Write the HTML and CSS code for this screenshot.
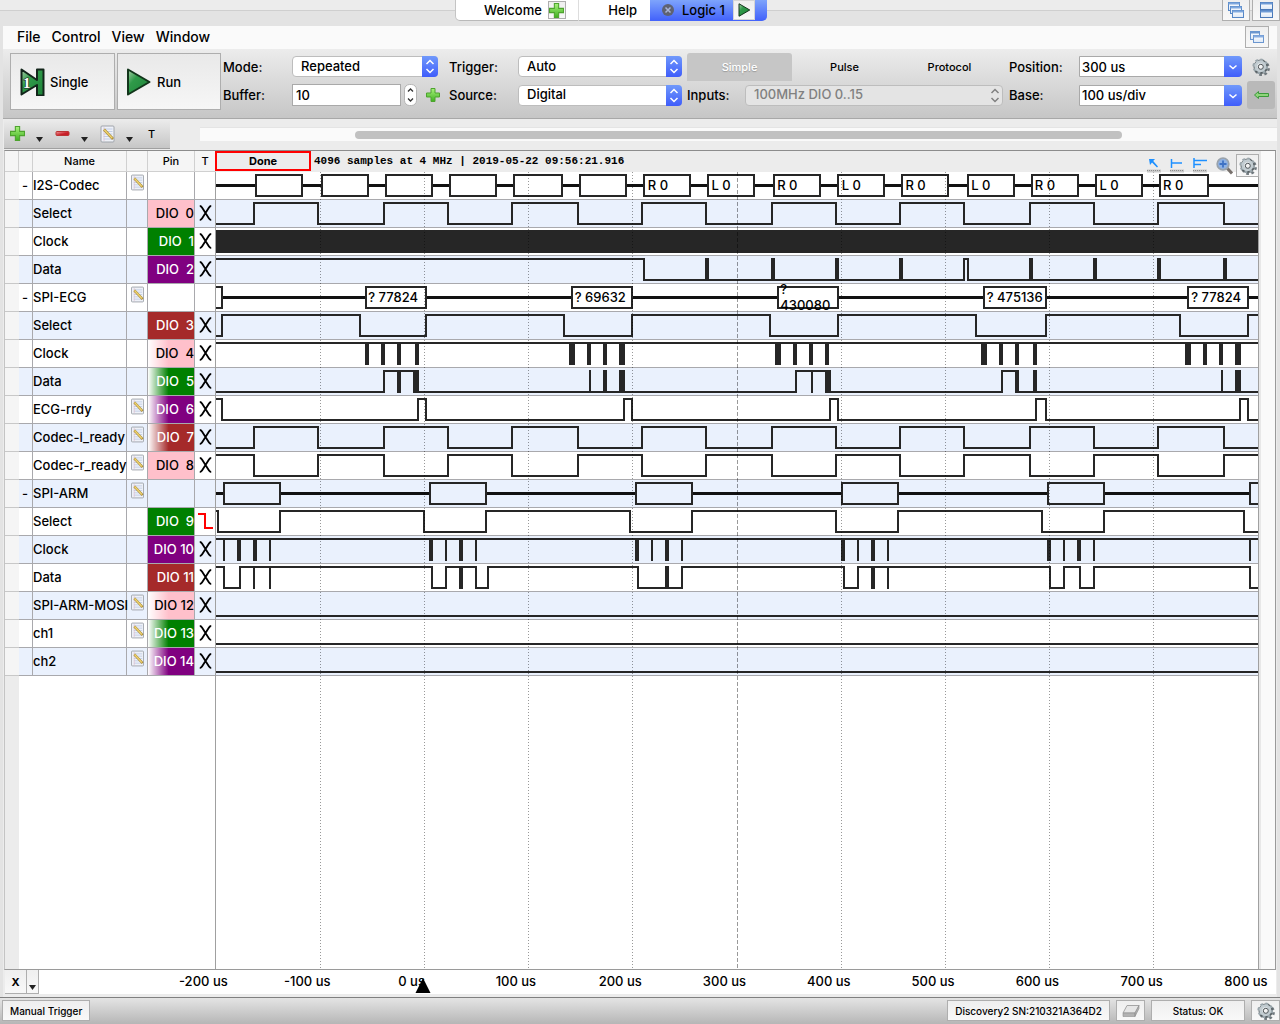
FILE: index.html
```html
<!DOCTYPE html>
<html lang="en">
<head>
<meta charset="utf-8">
<title>Logic 1</title>
<meta name="viewport" content="width=device-width, initial-scale=1">
<link rel="stylesheet" href="styles.css">
</head>
<body>
<svg class="defs" width="0" height="0" aria-hidden="true">
  <defs>
    <linearGradient id="g-green" x1="0" y1="0" x2="1" y2="1"><stop offset="0" stop-color="#a9cfa9"/><stop offset=".35" stop-color="#2f9a49"/><stop offset="1" stop-color="#1d8238"/></linearGradient>
    <linearGradient id="g-plus" x1="0" y1="0" x2="0" y2="1"><stop offset="0" stop-color="#a8f27c"/><stop offset="1" stop-color="#3fb021"/></linearGradient>
    <linearGradient id="g-minus" x1="0" y1="0" x2="1" y2="1"><stop offset="0" stop-color="#f0a0a0"/><stop offset=".6" stop-color="#c81e28"/></linearGradient>
    <linearGradient id="g-win" x1="0" y1="0" x2="0" y2="1"><stop offset="0" stop-color="#ffffff"/><stop offset="1" stop-color="#dde8f6"/></linearGradient>
    <symbol id="plus" viewBox="0 0 14 14"><path d="M5 .5h4V5h4.500v4H9v4.500H5V9H.5V5H5z" fill="url(#g-plus)" stroke="#4da32e"/></symbol>
    <symbol id="minus" viewBox="0 0 14 6"><rect x=".5" y=".5" width="13" height="4" rx="1" fill="url(#g-minus)" stroke="#b33"/></symbol>
    <symbol id="note" viewBox="0 0 14 18"><rect x=".5" y="1" width="13" height="16" rx="1" fill="#eef1f8" stroke="#a0a4ab"/><path d="M3 4h9M3 6.500h9M3 9h9M3 11.500h9M3 14h9" stroke="#c3cee6"/><path d="M3.500 2v14" stroke="#e3b9c6" stroke-width=".6"/><path d="M3.500 4.500l9 9.500" stroke="#a98a35" stroke-width="2.600"/><path d="M3.800 4.800l8 8.500" stroke="#eed26e" stroke-width="1.500"/></symbol>
    <symbol id="play" viewBox="0 0 24 28"><path d="M1 1.500L22.500 14 1 26.500z" fill="url(#g-green)" stroke="#12351b" stroke-width="2" stroke-linejoin="round"/></symbol>
    <symbol id="gear" viewBox="0 0 18 18"><circle cx="10" cy="10.200" r="6.600" fill="none" stroke="#6f787d" stroke-width="2.600" stroke-dasharray="2.700 2.480"/><circle cx="8.700" cy="8.800" r="5" fill="none" stroke="#596165" stroke-width="4.400"/><circle cx="8.300" cy="8.300" r="6.600" fill="none" stroke="#9aa6ac" stroke-width="2.600" stroke-dasharray="2.700 2.480"/><circle cx="8.300" cy="8.300" r="4.500" fill="#eef0f1" stroke="#c2ccd1" stroke-width="3"/><circle cx="8.800" cy="8.800" r="2.500" fill="#f3f3f3" stroke="#4d5458"/></symbol>
    <symbol id="updown" viewBox="0 0 16 21"><path d="M4.500 8L8 4.500 11.500 8M4.500 13L8 16.500 11.500 13" fill="none" stroke="currentColor" stroke-width="1.500"/></symbol>
    <symbol id="down" viewBox="0 0 16 21"><path d="M4.500 9.500L8 12.500l3.500-3" fill="none" stroke="currentColor" stroke-width="1.500"/></symbol>
    <symbol id="tri" viewBox="0 0 7 5"><path d="M0 0h7L3.500 5z" fill="#222"/></symbol>
    <symbol id="x" viewBox="0 0 13 16"><path d="M.8 1c1.200 0 1.700.6 2.200 1.400l7 11.200c.5.800 1 1.400 2.200 1.400M12.200 1c-1.200 0-1.700.6-2.200 1.400L3 13.600C2.500 14.400 2 15 .8 15" fill="none" stroke="#000" stroke-width="1.800"/></symbol>
    <symbol id="fall" viewBox="0 0 15 17"><path d="M0 2h7v14h8" fill="none" stroke="#f00" stroke-width="2"/></symbol>
    <symbol id="win1" viewBox="0 0 14 12"><rect x=".5" y=".5" width="9" height="8" fill="url(#g-win)" stroke="#6b96cf"/><path d="M.5 1.500h9" stroke="#6b96cf" stroke-width="2"/><rect x="3.500" y="4.500" width="10" height="7" fill="url(#g-win)" stroke="#6b96cf"/><path d="M3.500 5.500h10" stroke="#86ace0" stroke-width="2"/></symbol>
    <symbol id="win3" viewBox="0 0 16 16"><g fill="url(#g-win)" stroke="#5586c6"><rect x=".5" y=".5" width="11" height="8"/><rect x="2.500" y="4.500" width="11" height="7"/><rect x="4.500" y="8.500" width="11" height="7"/></g><path d="M.5 1.500h11M2.500 5.500h11M4.500 9.500h11" stroke="#7fa8de" stroke-width="2"/></symbol>
    <symbol id="win2" viewBox="0 0 13 16"><g fill="url(#g-win)" stroke="#4a79b8"><rect x=".5" y=".5" width="12" height="7"/><rect x=".5" y="8.500" width="12" height="7"/></g><path d="M.5 1.500h12M.5 9.500h12" stroke="#6e9bd6" stroke-width="2"/></symbol>
    <symbol id="ruler" viewBox="0 0 14 4"><rect width="14" height="3" y=".5" fill="#c9c9c9"/><path d="M0 1.500h14" stroke="#8e8e8e" stroke-dasharray="1 1"/></symbol>
  </defs>
</svg>

<header class="tabbar">
  <nav class="tabs" aria-label="Instruments">
    <div class="tab tab-welcome"><button class="plain">Welcome</button><button class="mini" aria-label="New instrument"><svg width="15" height="15"><use href="#plus"/></svg></button></div>
    <button class="tab tab-help">Help</button>
    <div class="tab tab-logic">
      <button class="plain" aria-label="Close"><svg width="12" height="12" viewBox="0 0 12 12"><circle cx="6" cy="6" r="6" fill="#5e6272"/><path d="M3.500 3.500l5 5m0-5l-5 5" stroke="#a9b4d8" stroke-width="1.500"/></svg></button>
      <button class="plain">Logic 1</button>
      <button class="mini run" aria-label="Run Logic 1"><svg width="13" height="14"><use href="#play"/></svg></button>
    </div>
  </nav>
  <div class="winbtns">
    <button class="mini" aria-label="Cascade"><svg width="16" height="16"><use href="#win3"/></svg></button>
    <button class="mini" aria-label="Tile"><svg width="13" height="16"><use href="#win2"/></svg></button>
  </div>
</header>

<main class="window">
  <nav class="menu" aria-label="Menu">
    <button class="plain">File</button><button class="plain">Control</button><button class="plain">View</button><button class="plain">Window</button>
    <button class="mini undock" aria-label="Undock"><svg width="14" height="12"><use href="#win1"/></svg></button>
  </nav>

  <section class="toolbar" aria-label="Acquisition">
    <button class="big"><svg width="26" height="28" viewBox="0 0 26 28"><path d="M1.500 1.500L17 12V1.500h6.500v26H17V17L1.500 26.500z" fill="url(#g-green)" stroke="#12251a" stroke-width="2" stroke-linejoin="round"/><text x="3" y="20" class="one">1</text></svg>Single</button>
    <button class="big"><svg width="24" height="28"><use href="#play"/></svg>Run</button>
    <div class="settings">
      <label for="mode">Mode:</label>
      <span class="pick mode"><select id="mode"><option>Repeated</option></select><svg class="cap"><use href="#updown"/></svg></span>
      <label for="trigger">Trigger:</label>
      <span class="pick wide"><select id="trigger"><option>Auto</option></select><svg class="cap"><use href="#updown"/></svg></span>
      <div class="kinds"><button class="on">Simple</button><button>Pulse</button><button>Protocol</button></div>
      <label for="position">Position:</label>
      <span class="pick combo"><select id="position"><option>300 us</option></select><svg class="cap"><use href="#down"/></svg></span>
      <button class="plain end" aria-label="Options"><svg width="18" height="18"><use href="#gear"/></svg></button>

      <label for="buffer">Buffer:</label>
      <span class="buffer"><input id="buffer" type="text" value="10"><svg class="spin" viewBox="0 0 13 22"><rect x=".5" y=".5" width="12" height="21" rx="5" fill="#fff" stroke="#b5b5b5"/><path d="M4 7.500L6.500 5 9 7.500M4 14.500L6.500 17 9 14.500" fill="none" stroke="#333" stroke-width="1.300"/></svg><button class="plain" aria-label="Add buffer"><svg width="14" height="14"><use href="#plus"/></svg></button></span>
      <label for="source">Source:</label>
      <span class="pick wide"><select id="source"><option>Digital</option></select><svg class="cap"><use href="#updown"/></svg></span>
      <div class="inputs"><label for="inputs">Inputs:</label><span class="pick off"><select id="inputs" disabled><option>100MHz DIO 0..15</option></select><svg class="cap"><use href="#updown"/></svg></span></div>
      <label for="base">Base:</label>
      <span class="pick combo"><select id="base"><option>100 us/div</option></select><svg class="cap"><use href="#down"/></svg></span>
      <button class="plain back" aria-label="Collapse"><svg width="15" height="8" viewBox="0 0 15 8"><path d="M.5 4L4.500.5v2h10v3h-10v2z" fill="#8fd47c" stroke="#3b9a3b"/></svg></button>
    </div>
  </section>

  <div class="strip">
    <div class="edit">
      <button class="plain" aria-label="Add"><svg width="15" height="15"><use href="#plus"/></svg><svg class="tri"><use href="#tri"/></svg></button>
      <button class="plain" aria-label="Remove"><svg width="15" height="6"><use href="#minus"/></svg><svg class="tri"><use href="#tri"/></svg></button>
      <button class="plain" aria-label="Edit"><svg width="15" height="18"><use href="#note"/></svg><svg class="tri"><use href="#tri"/></svg></button>
      <button class="plain letter">T</button>
    </div>
    <div class="scroll"><div class="thumb"></div></div>
  </div>

  <section class="scope" aria-label="Signals">
    <div class="view">
      <table>
        <colgroup><col class="c-gut"><col class="c-exp"><col class="c-name"><col class="c-note"><col class="c-pin"><col class="c-trig"><col></colgroup>
        <thead><tr><th></th><th></th><th>Name</th><th></th><th>Pin</th><th>T</th><th class="plot"><div class="state"><span class="done">Done</span><span class="info">4096 samples at 4 MHz | 2019-05-22 09:56:21.916</span></div></th></tr></thead>
        <tbody>
          <tr><td></td><td>-</td><td>I2S-Codec</td><td><svg class="nt"><use href="#note"/></svg></td><td></td><td></td>
            <td class="plot"><svg><svg viewBox="216 0 1043 27" preserveAspectRatio="none"><path class="bus" d="M216 13.500h40M302 13.500h20M368 13.500h18M432 13.500h18M496 13.500h18M562 13.500h18M626 13.500h18M690 13.500h18M754 13.500h20M820 13.500h18M884 13.500h18M948 13.500h20M1014 13.500h18M1078 13.500h18M1142 13.500h18M1208 13.500h51"/><path class="w" d="M256 3h46v21h-46zM322 3h46v21h-46zM386 3h46v21h-46zM450 3h46v21h-46zM514 3h48v21h-48zM580 3h46v21h-46zM644 3h46v21h-46zM708 3h46v21h-46zM774 3h46v21h-46zM838 3h46v21h-46zM902 3h46v21h-46zM968 3h46v21h-46zM1032 3h46v21h-46zM1096 3h46v21h-46zM1160 3h48v21h-48z"/></svg>
            <text x="41.400%" y="18">R 0</text><text x="47.500%" y="18">L 0</text><text x="53.800%" y="18">R 0</text><text x="60%" y="18">L 0</text><text x="66.100%" y="18">R 0</text><text x="72.400%" y="18">L 0</text><text x="78.500%" y="18">R 0</text><text x="84.700%" y="18">L 0</text><text x="90.800%" y="18">R 0</text></svg></td></tr>
          <tr><td></td><td></td><td>Select</td><td></td><td class="pink">DIO  0</td><td><svg class="x"><use href="#x"/></svg></td>
            <td class="plot"><svg viewBox="216 0 1043 27" preserveAspectRatio="none"><path class="w" d="M216 24H254V3H318V24H384V3H448V24H512V3H578V24H642V3H706V24H772V3H836V24H900V3H964V24H1030V3H1094V24H1158V3H1224V24H1259"/></svg></td></tr>
          <tr><td></td><td></td><td>Clock</td><td></td><td class="green">DIO  1</td><td><svg class="x"><use href="#x"/></svg></td>
            <td class="plot"><svg viewBox="216 0 1043 27" preserveAspectRatio="none"><path class="b" d="M216 2h1043v23H216z"/></svg></td></tr>
          <tr><td></td><td></td><td>Data</td><td></td><td class="purple">DIO  2</td><td><svg class="x"><use href="#x"/></svg></td>
            <td class="plot"><svg viewBox="216 0 1043 27" preserveAspectRatio="none"><path class="w" d="M216 3H644V24H964V3H968V24H1259"/><path class="b" d="M705 2h4v23h-4zM771 2h4v23h-4zM835 2h4v23h-4zM899 2h4v23h-4zM1029 2h4v23h-4zM1093 2h4v23h-4zM1157 2h4v23h-4zM1223 2h4v23h-4z"/></svg></td></tr>
          <tr><td></td><td>-</td><td>SPI-ECG</td><td><svg class="nt"><use href="#note"/></svg></td><td></td><td></td>
            <td class="plot"><svg><svg viewBox="216 0 1043 27" preserveAspectRatio="none"><path class="bus" d="M222 13.500H366M426 13.500H572M632 13.500H778M838 13.500H984M1046 13.500H1188M1248 13.500H1259"/><path class="w" d="M216 3h6v21h-6M366 3h60v21h-60zM572 3h60v21h-60zM778 3h60v21h-60zM984 3h62v21h-62zM1188 3h60v21h-60z"/></svg>
            <text x="14.600%" y="18">? 77824</text><text x="34.400%" y="18">? 69632</text><text x="54.100%" y="10">?</text><text x="54.100%" y="26">430080</text><text x="73.900%" y="18">? 475136</text><text x="93.500%" y="18">? 77824</text></svg></td></tr>
          <tr><td></td><td></td><td>Select</td><td></td><td class="brown">DIO  3</td><td><svg class="x"><use href="#x"/></svg></td>
            <td class="plot"><svg viewBox="216 0 1043 27" preserveAspectRatio="none"><path class="w" d="M216 24H222V3H360V24H426V3H564V24H632V3H770V24H838V3H976V24H1046V3H1180V24H1248V3H1259"/></svg></td></tr>
          <tr><td></td><td></td><td>Clock</td><td></td><td class="pink fade">DIO  4</td><td><svg class="x"><use href="#x"/></svg></td>
            <td class="plot"><svg viewBox="216 0 1043 27" preserveAspectRatio="none"><path class="w" d="M216 3H1259"/><path class="b" d="M365 3h4v22h-4zM381 3h4v22h-4zM397 3h4v22h-4zM415 3h4v22h-4zM569 3h6v22h-6zM587 3h4v22h-4zM603 3h4v22h-4zM619 3h6v22h-6zM775 3h6v22h-6zM793 3h4v22h-4zM809 3h4v22h-4zM825 3h4v22h-4zM981 3h6v22h-6zM999 3h4v22h-4zM1015 3h4v22h-4zM1033 3h4v22h-4zM1185 3h6v22h-6zM1203 3h4v22h-4zM1219 3h4v22h-4zM1235 3h6v22h-6z"/></svg></td></tr>
          <tr><td></td><td></td><td>Data</td><td></td><td class="green fade">DIO  5</td><td><svg class="x"><use href="#x"/></svg></td>
            <td class="plot"><svg viewBox="216 0 1043 27" preserveAspectRatio="none"><path class="w" d="M216 24H384V3H416V24H796V3H828V24H1002V3H1017V24H1259"/><path class="b" d="M397 3h4v22h-4zM413 2h6v23h-6zM589 2h2v23h-2zM603 2h4v23h-4zM619 2h6v23h-6zM811 3h2v22h-2zM825 2h6v23h-6zM1015 2h4v23h-4zM1033 2h4v23h-4zM1221 2h2v23h-2zM1235 2h6v23h-6z"/></svg></td></tr>
          <tr><td></td><td></td><td>ECG-rrdy</td><td><svg class="nt"><use href="#note"/></svg></td><td class="purple fade">DIO  6</td><td><svg class="x"><use href="#x"/></svg></td>
            <td class="plot"><svg viewBox="216 0 1043 27" preserveAspectRatio="none"><path class="w" d="M216 3H222V24H418V3H426V24H624V3H632V24H830V3H838V24H1036V3H1046V24H1240V3H1248V24H1259"/></svg></td></tr>
          <tr><td></td><td></td><td>Codec-l_ready</td><td><svg class="nt"><use href="#note"/></svg></td><td class="brown fade">DIO  7</td><td><svg class="x"><use href="#x"/></svg></td>
            <td class="plot"><svg viewBox="216 0 1043 27" preserveAspectRatio="none"><path class="w" d="M216 24H254V3H318V24H384V3H448V24H512V3H578V24H642V3H706V24H772V3H836V24H900V3H964V24H1030V3H1094V24H1158V3H1224V24H1259"/></svg></td></tr>
          <tr><td></td><td></td><td>Codec-r_ready</td><td><svg class="nt"><use href="#note"/></svg></td><td class="pink">DIO  8</td><td><svg class="x"><use href="#x"/></svg></td>
            <td class="plot"><svg viewBox="216 0 1043 27" preserveAspectRatio="none"><path class="w" d="M216 3H254V24H318V3H384V24H448V3H512V24H578V3H642V24H706V3H772V24H836V3H900V24H964V3H1030V24H1094V3H1158V24H1224V3H1259"/></svg></td></tr>
          <tr><td></td><td>-</td><td>SPI-ARM</td><td><svg class="nt"><use href="#note"/></svg></td><td></td><td></td>
            <td class="plot"><svg viewBox="216 0 1043 27" preserveAspectRatio="none"><path class="bus" d="M216 13.500h8M280 13.500H430M486 13.500H636M692 13.500H842M898 13.500H1048M1104 13.500H1250"/><path class="w" d="M224 3h56v21h-56zM430 3h56v21h-56zM636 3h56v21h-56zM842 3h56v21h-56zM1048 3h56v21h-56zM1259 3h-9v21h9"/></svg></td></tr>
          <tr><td></td><td></td><td>Select</td><td></td><td class="green">DIO  9</td><td><svg class="fall"><use href="#fall"/></svg></td>
            <td class="plot"><svg viewBox="216 0 1043 27" preserveAspectRatio="none"><path class="w" d="M216 3H218V24H280V3H424V24H486V3H630V24H692V3H836V24H898V3H1042V24H1104V3H1244V24H1259"/></svg></td></tr>
          <tr><td></td><td></td><td>Clock</td><td></td><td class="purple">DIO 10</td><td><svg class="x"><use href="#x"/></svg></td>
            <td class="plot"><svg viewBox="216 0 1043 27" preserveAspectRatio="none"><path class="w" d="M216 3H1259"/><path class="b" d="M223 3h2v22h-2zM237 3h4v22h-4zM253 3h4v22h-4zM269 3h2v22h-2zM429 3h4v22h-4zM445 3h2v22h-2zM459 3h4v22h-4zM475 3h2v22h-2zM635 3h4v22h-4zM651 3h2v22h-2zM665 3h4v22h-4zM681 3h2v22h-2zM841 3h4v22h-4zM857 3h2v22h-2zM871 3h4v22h-4zM887 3h2v22h-2zM1047 3h4v22h-4zM1063 3h2v22h-2zM1077 3h4v22h-4zM1093 3h2v22h-2zM1249 3h2v22h-2z"/></svg></td></tr>
          <tr><td></td><td></td><td>Data</td><td></td><td class="brown">DIO 11</td><td><svg class="x"><use href="#x"/></svg></td>
            <td class="plot"><svg viewBox="216 0 1043 27" preserveAspectRatio="none"><path class="w" d="M216 3H224V24H240V3H432V24H446V3H476V24H488V3H638V24H682V3H844V24H858V3H1050V24H1064V3H1080V24H1094V3H1250V24H1259"/><path class="b" d="M253 3h2v22h-2zM269 3h2v22h-2zM459 3h4v22h-4zM665 2h4v23h-4zM871 3h4v22h-4zM887 3h2v22h-2z"/></svg></td></tr>
          <tr><td></td><td></td><td>SPI-ARM-MOSI</td><td><svg class="nt"><use href="#note"/></svg></td><td class="pink fade">DIO 12</td><td><svg class="x"><use href="#x"/></svg></td>
            <td class="plot"><svg viewBox="216 0 1043 27" preserveAspectRatio="none"><path class="w" d="M216 24H1259"/></svg></td></tr>
          <tr><td></td><td></td><td>ch1</td><td><svg class="nt"><use href="#note"/></svg></td><td class="green fade">DIO 13</td><td><svg class="x"><use href="#x"/></svg></td>
            <td class="plot"><svg viewBox="216 0 1043 27" preserveAspectRatio="none"><path class="w" d="M216 24H1259"/></svg></td></tr>
          <tr><td></td><td></td><td>ch2</td><td><svg class="nt"><use href="#note"/></svg></td><td class="purple fade">DIO 14</td><td><svg class="x"><use href="#x"/></svg></td>
            <td class="plot"><svg viewBox="216 0 1043 27" preserveAspectRatio="none"><path class="w" d="M216 24H1259"/></svg></td></tr>
        </tbody>
      </table>
      <svg class="grid" aria-hidden="true"><line x1="10%" x2="10%" y2="100%"/><line x1="20%" x2="20%" y2="100%"/><line x1="30%" x2="30%" y2="100%"/><line x1="40%" x2="40%" y2="100%"/><line class="mid" x1="50%" x2="50%" y2="100%"/><line x1="60%" x2="60%" y2="100%"/><line x1="70%" x2="70%" y2="100%"/><line x1="80%" x2="80%" y2="100%"/><line x1="90%" x2="90%" y2="100%"/></svg>
      <div class="tools">
        <button class="plain" aria-label="Cursor"><svg width="14" height="15" viewBox="0 0 14 15"><path d="M2 1h6L6.200 3 11 8.500 10 9.500 5 4.500 3 7z" fill="#1e90ff"/><use href="#ruler" y="11" width="14" height="4"/></svg></button>
        <button class="plain" aria-label="Cursor pair"><svg width="14" height="15" viewBox="0 0 14 15"><path d="M1.500 1v9M2 5h10" fill="none" stroke="#1e90ff" stroke-width="1.500"/><use href="#ruler" y="11" width="14" height="4"/></svg></button>
        <button class="plain" aria-label="Cursor list"><svg width="14" height="15" viewBox="0 0 14 15"><path d="M1 0v10M1 2.500h13M1 6.500h7" fill="none" stroke="#1e90ff" stroke-width="1.500"/><use href="#ruler" y="11" width="14" height="4"/></svg></button>
        <button class="plain" aria-label="Zoom"><svg width="17" height="18" viewBox="0 0 17 18"><path d="M11 11l5 5.500" stroke="#77706c" stroke-width="3"/><circle cx="7" cy="7" r="5.800" fill="#8fb2e4" stroke="#9aa3ac" stroke-width="1.800"/><path d="M7 3.500v7M3.500 7h7" stroke="#3f72c4" stroke-width="1.800"/></svg></button>
        <button class="mini" aria-label="Plot options"><svg width="18" height="18"><use href="#gear"/></svg></button>
      </div>
    </div>
    <div class="vscroll"></div>
  </section>

  <div class="axis">
    <div class="xsel"><button class="mini">X</button><button class="mini low" aria-label="Axis menu"><svg class="tri"><use href="#tri"/></svg></button></div>
    <div class="ticks"><span>-200 us</span><span>-100 us</span><span class="zero">0 us<svg class="marker" viewBox="0 0 16 16"><path d="M8 0l7.500 15H.5z"/></svg></span><span>100 us</span><span>200 us</span><span>300 us</span><span>400 us</span><span>500 us</span><span>600 us</span><span>700 us</span><span>800 us</span></div>
  </div>
</main>

<footer class="status">
  <button class="mini">Manual Trigger</button>
  <button class="mini device">Discovery2 SN:210321A364D2</button>
  <button class="mini sq" aria-label="Device"><svg width="18" height="12" viewBox="0 0 18 12"><path d="M5 .5h12L13 8H1z" fill="#e6e6e6" stroke="#a5a5a5"/><path d="M1 8h12v3.500H1zM13 8l4-7.500v3L13 11.500z" fill="#b2b2b2" stroke="#8e8e8e" stroke-width=".6"/></svg></button>
  <button class="mini ok">Status: OK</button>
  <button class="mini sq" aria-label="Settings"><svg width="18" height="18"><use href="#gear"/></svg></button>
</footer>
</body>
</html>
```
FILE: styles.css
```css
* { box-sizing: border-box; }
body {
  margin: 0;
  min-height: 100vh;
  display: flex;
  flex-direction: column;
  background: #e3e3e3;
  color: #000;
  font: 500 13px/16px Inter, "Liberation Sans", sans-serif;
}
.defs { position: absolute; }
svg { display: block; flex: none; }
button, select, input { font: inherit; color: inherit; margin: 0; }
button { padding: 0; white-space: nowrap; }
.plain { border: 0; background: none; }
.mini {
  display: flex;
  align-items: center;
  justify-content: center;
  border: 1px solid #aeaeae;
  background: linear-gradient(#efefef, #f8f8f8);
}

/* instrument tabs */
.tabbar {
  display: flex;
  height: 26px;
  align-items: flex-start;
  background: linear-gradient(#ececec 10px, #cfcfcf 10px, #cfcfcf 11px, #e3e3e3 11px);
}
.tabs { display: flex; margin: 0 auto; }
.tab {
  display: flex;
  align-items: center;
  height: 21px;
  border: 0;
  border-bottom: 1px solid #b9b9b9;
  background: #fff;
}
.tab-welcome { width: 124px; padding-left: 28px; gap: 6px; border-left: 1px solid #c4c4c4; border-right: 1px solid #ddd; border-radius: 0 0 0 5px; }
.tab-welcome .mini { width: 18px; height: 18px; }
.tab-help { width: 71px; justify-content: flex-end; padding-right: 13px; }
.tab-logic { width: 117px; padding-left: 12px; gap: 8px; background: linear-gradient(#7ea4fb, #4464fb); border-bottom-color: #4464fb; border-radius: 0 0 5px 0; }
.tab-logic .run { width: 22px; height: 20px; border-color: #d5d5d5; margin-left: auto; margin-right: 12px; }
.winbtns { display: flex; gap: 2px; }
.winbtns .mini { width: 28px; height: 21px; border-top: 0; }

/* window body */
.window { flex: 1; display: flex; flex-direction: column; margin: 0 3px; background: #ececec; }
.menu { display: flex; align-items: center; height: 23px; padding-left: 14px; padding-bottom: 1px; gap: 11px; background: #fafafa; font-size: 14px; }
.undock { width: 24px; height: 22px; margin-left: auto; margin-right: 8px; }

.toolbar {
  display: flex;
  gap: 2px;
  height: 70px;
  padding: 4px 2px 8px 7px;
  border-bottom: 1px solid #a8a8a8;
  background: linear-gradient(#ececec, #c6c6c6);
}
.big { display: flex; align-items: center; gap: 2px; width: 105px; padding-left: 9px; border: 1px solid #aeaeae; background: linear-gradient(#e9e9e9, #f6f6f6); }
.big svg { margin-right: 2px; }
.big + .big { width: 104px; gap: 4px; }
.one { fill: #fff; stroke: #222; stroke-width: 1px; paint-order: stroke; font: 700 15px "Liberation Serif", serif; }
.settings {
  flex: 1;
  display: grid;
  grid-template-columns: 69px 157px 69px 169px 1fr 70px 168px 28px;
  grid-template-rows: 27px 30px;
  align-items: center;
}
.pick { display: grid; height: 21px; margin-right: 5px; }
.pick select, .pick .cap { grid-area: 1 / 1; }
.pick select {
  appearance: none;
  width: 100%;
  height: 21px;
  padding: 0 18px 2px 8px;
  border: 1px solid #bdbdbd;
  border-radius: 4px;
  background: #fff;
}
.mode { margin-right: 11px; }
.cap { justify-self: end; width: 16px; height: 21px; border-radius: 0 4px 4px 0; color: #fff; background: linear-gradient(#7099fb, #3f5dfb); pointer-events: none; }
.combo .cap { width: 18px; }
.combo select { border-radius: 0 4px 4px 0; border-color: #a9a9a9; padding-left: 2px; padding-bottom: 0; }
.off { flex: 1; margin-right: 6px; }
.off select { background: #e4e4e4; color: #808080; opacity: 1; }
.off .cap { background: none; color: #808080; }
.kinds { display: flex; height: 28px; margin-right: 7px; }
.kinds button { flex: 1; border: 0; background: none; font-size: 11px; }
.kinds .on { background: #c6c6c6; color: #fff; border-radius: 3px 3px 0 0; text-shadow: 0 1px 1px #999; }
.inputs { display: flex; align-items: center; }
.inputs label { width: 58px; }
.buffer { display: flex; align-items: center; }
.buffer input { width: 109px; height: 22px; padding: 0 3px; border: 1px solid #a9a9a9; background: #fff; }
.spin { width: 13px; height: 22px; margin: 0 9px 0 3px; }
.end { justify-self: center; }
.back { display: flex; align-items: center; justify-content: center; height: 28px; border-radius: 3px; background: #b9b9b9; }

.strip { display: flex; align-items: center; height: 31px; padding: 0 0 1px 1px; }
.edit { display: flex; height: 30px; width: 166px; padding-left: 6px; background: linear-gradient(#ececec, #c6c6c6); border-bottom: 1px solid #a0a0a0; }
.edit button { display: flex; align-items: center; width: 45px; gap: 11px; }
.edit .letter { width: 24px; padding-left: 3px; font-size: 11px; }
.tri { width: 7px; height: 5px; }
.edit .tri { margin-top: 12px; }
.scroll { flex: 1; height: 14px; margin-left: 30px; padding: 3px 0; background: #fafafa; border-top: 1px solid #e4e4e4; }
.thumb { width: 71.200%; height: 8px; margin-left: 14.400%; border-radius: 4px; background: #c1c1c1; }

/* signal list and plot */
.scope { flex: 1; display: flex; margin: 0 1px; border: 1px solid #9a9a9a; border-top-color: #8c8c8c; border-left-color: #c4c4c4; }
.view { flex: 1; position: relative; background: linear-gradient(90deg, #ececec 14px, #fff 14px); }
.vscroll { width: 16px; border-left: 2px solid #e8e8e8; background: #fafafa; }
table { width: 100%; table-layout: fixed; border-collapse: separate; border-spacing: 0; }
.c-gut, .c-exp { width: 14px; }
.c-name { width: 94px; }
.c-note, .c-trig { width: 21px; }
.c-pin { width: 47px; }
th, td { padding: 0 0 2px; height: 28px; border: 0 solid #a9a9ad; border-width: 0 1px 1px 0; white-space: pre; }
th { padding: 0; height: 21px; font-size: 11px; font-weight: 500; line-height: 14px; background: #f5f5f5; border-color: #d0d0d0; }
tbody tr { background: #fff; }
tbody tr:nth-child(even) { background: #eaf1fd; }
td:first-child { background: #f5f5f5; border-right: 0; border-color: #c8c8c8; }
td:nth-child(2) { text-align: right; padding-right: 4px; }
td:nth-child(5) { text-align: right; }
td.plot, th.plot { padding: 0; border-right: 0; }
th.plot { border-bottom: 0; background: #ececec; }
td.plot > svg { width: 100%; height: 27px; overflow: visible; }
.pink { background: #ffc0cb; }
.green { background: #008000; color: #fff; }
.purple { background: #800080; color: #fff; }
.brown { background: #a52a2a; color: #fff; }
.fade { background: linear-gradient(90deg, #fff, transparent 45%), var(--pin); }
.pink.fade { --pin: #ffc0cb; }
.green.fade { --pin: #008000; }
.purple.fade { --pin: #800080; }
.brown.fade { --pin: #a52a2a; }
.nt { width: 13px; height: 17px; margin: 0 0 4px 4px; }
.x { width: 13px; height: 16px; margin: 0 auto; }
.fall { width: 15px; height: 17px; margin: 0 auto; }
.w { fill: none; stroke: #262626; stroke-width: 2px; }
.b { fill: #262626; }
.bus { fill: none; stroke: #111; stroke-width: 3px; }
.state { display: flex; height: 21px; align-items: flex-start; margin-left: -1px; }
.done { width: 96px; height: 20px; border: 2px solid #f00; font-weight: 700; line-height: 17px; text-align: center; }
.info { padding-left: 3px; font: 700 11px/20px "Liberation Mono", monospace; }
.grid { position: absolute; left: 210px; top: 21px; width: calc(100% - 210px); height: calc(100% - 21px); border: 1px solid #a0a0a0; border-width: 0 1px; shape-rendering: crispEdges; pointer-events: none; }
.grid line { stroke: #000; stroke-opacity: .4; stroke-dasharray: 1 2; }
.grid .mid { stroke-dasharray: 4 2; }
.tools { position: absolute; top: 3px; right: 0; display: flex; align-items: center; gap: 9px; height: 23px; }
.tools .mini { width: 23px; height: 23px; margin-left: -6px; }

.axis { display: flex; height: 24px; margin: 0 1px 3px 2px; background: #fff; }
.xsel { display: flex; width: 34px; }
.xsel .mini { width: 22px; font-size: 11px; font-weight: 700; border-top: 0; border-left: 0; }
.xsel .low { width: 12px; align-items: flex-end; padding-bottom: 3px; }
.ticks { flex: 1; display: flex; justify-content: space-between; margin: 3px 6px 0 140px; }
.ticks span { width: 48px; text-align: center; white-space: nowrap; }
.zero { position: relative; }
.marker { position: absolute; left: 27px; top: 5px; width: 16px; height: 16px; }

.status { display: flex; gap: 6px; height: 27px; padding: 2px 0 3px 2px; border-top: 1px solid #808080; background: linear-gradient(#e4e4e4, #b6b6b6); font-size: 10px; }
.status .mini { padding: 0 7px; }
.status .device { margin-left: auto; }
.status .sq { width: 29px; padding: 0; }
.status .ok { width: 94px; }
```
